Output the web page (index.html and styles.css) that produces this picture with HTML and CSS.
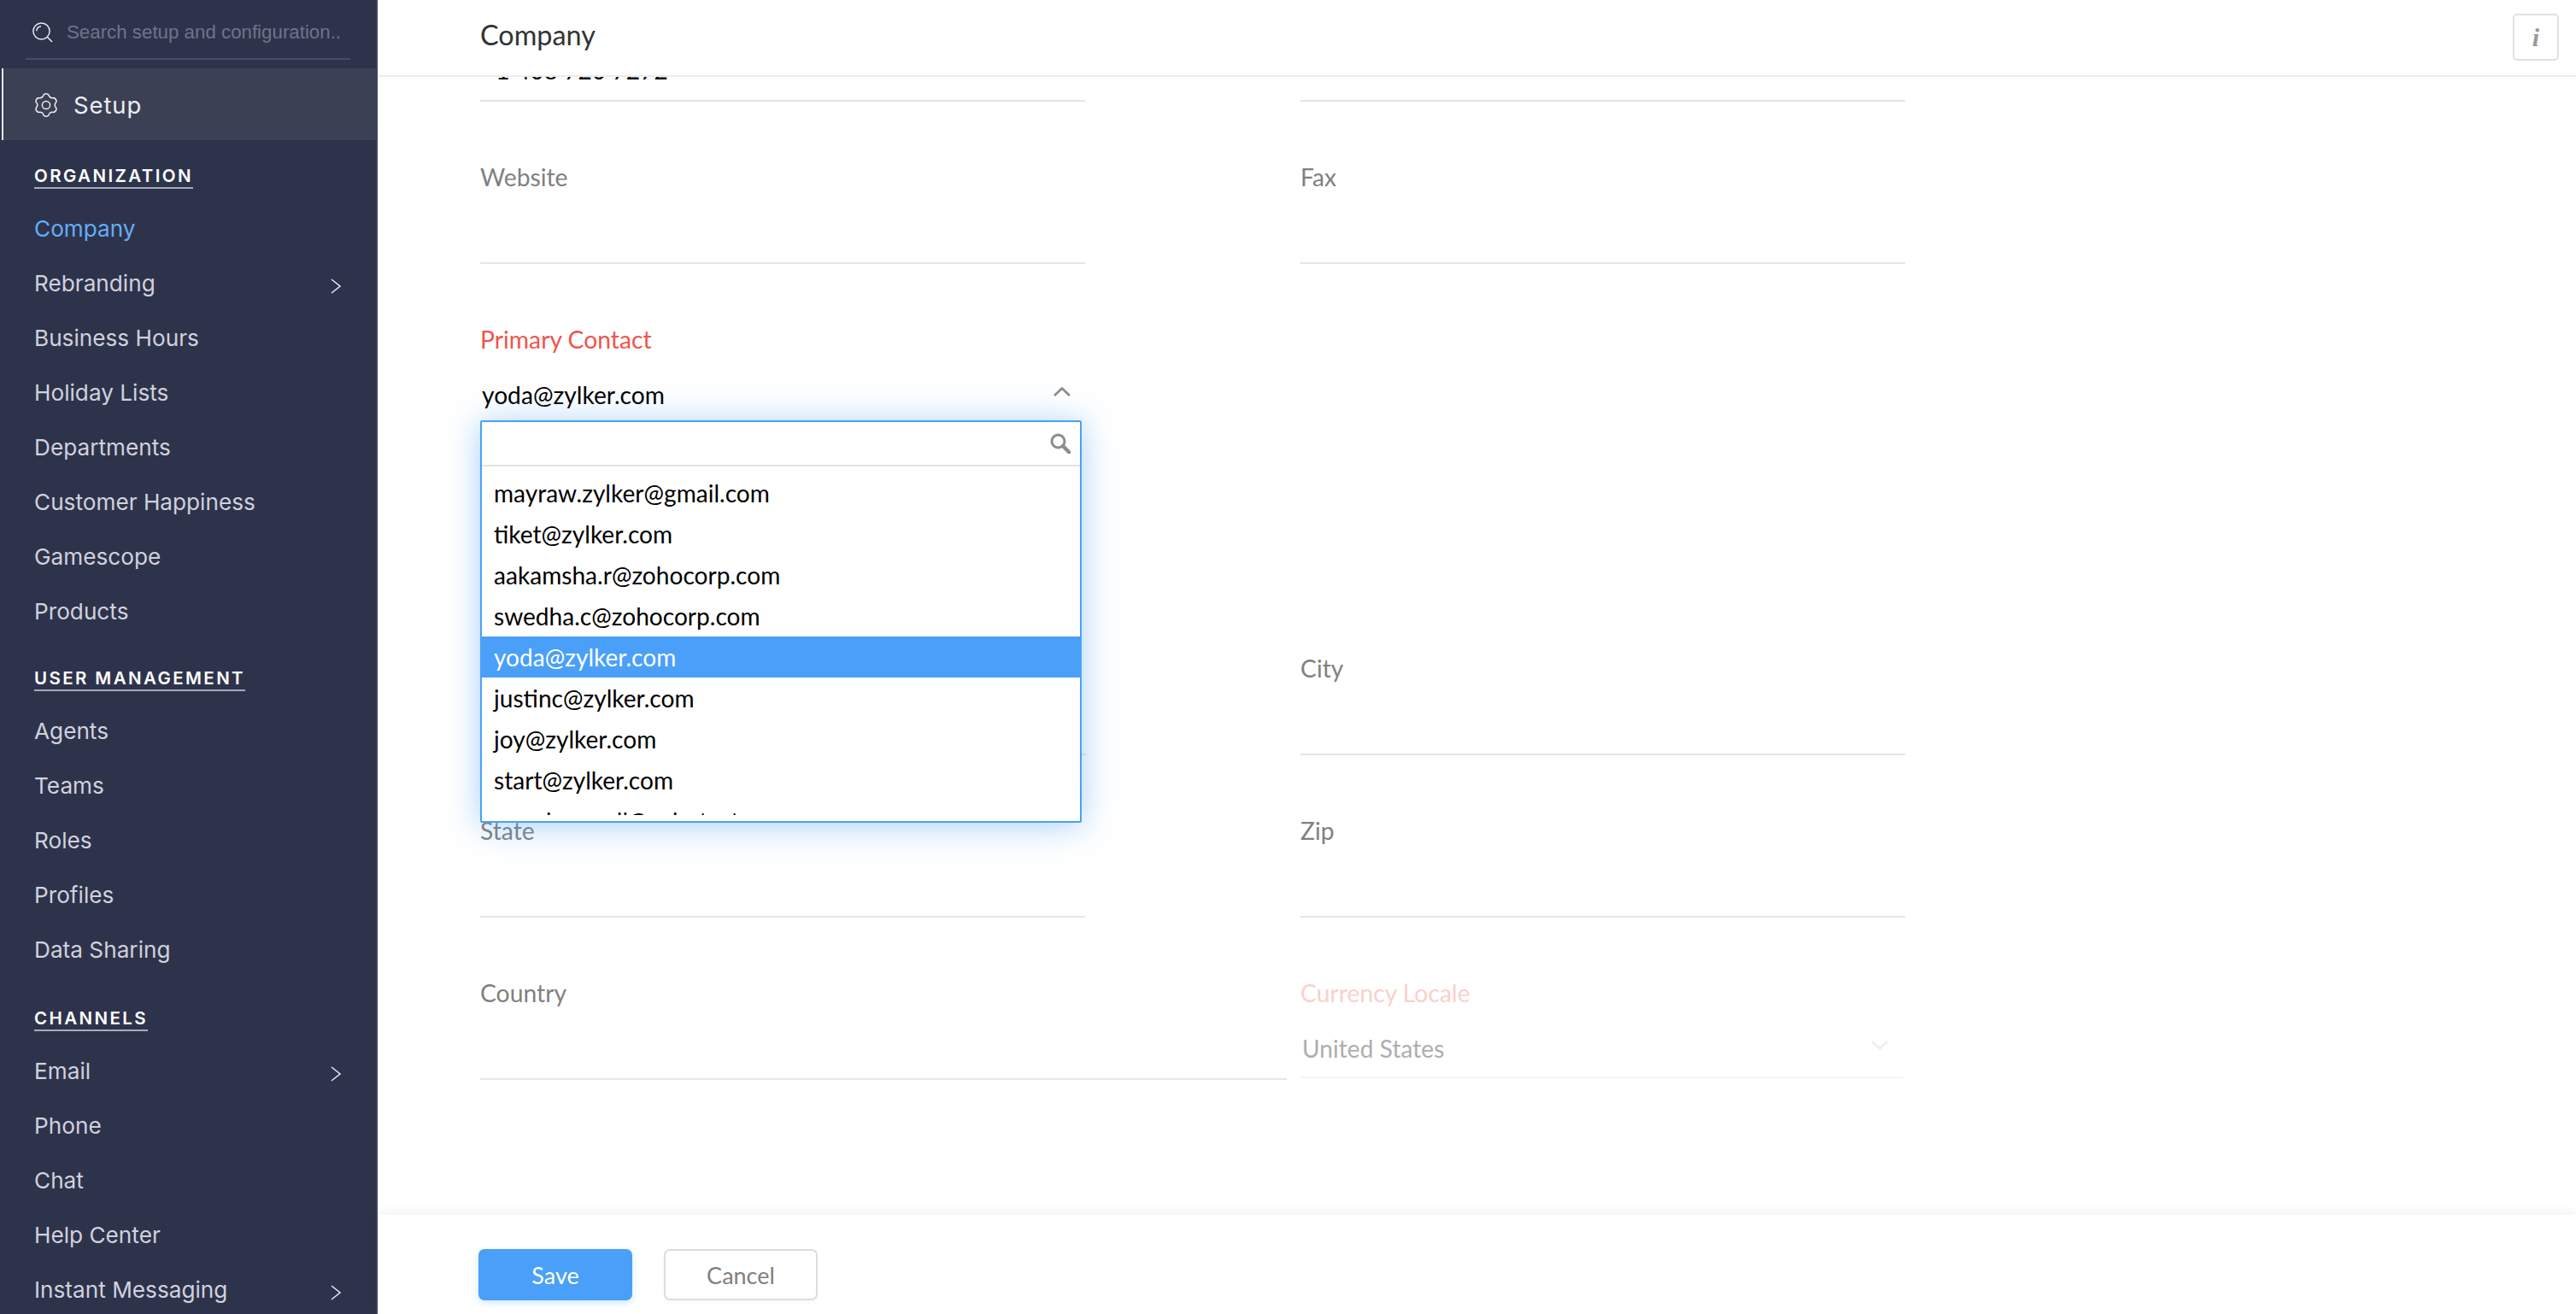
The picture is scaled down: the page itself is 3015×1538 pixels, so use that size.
FILE: index.html
```html
<!DOCTYPE html>
<html lang="en">
<head>
<meta charset="utf-8">
<title>Company - Setup</title>
<link rel="stylesheet" href="styles.css">
</head>
<body>
<div class="app">
  <aside class="sidebar">
    <div class="side-search">
      <svg class="side-search-icon" viewBox="0 0 24 24"><circle cx="10.5" cy="10.5" r="9.6"/><path d="M17.5 17.5 23 23M4.8 10.2A6 6 0 0 1 10 4.8"/></svg>
      <span class="side-search-text">Search setup and configuration..</span>
    </div>
    <div class="setup-row">
      <svg class="gear" viewBox="-1 -1 28 28"><path d="M10.19.82Q13-1.2 15.81.82Q17.25 5.64 22.14 4.47Q25.3 5.9 24.95 9.34Q21.5 13 24.95 16.66Q25.3 20.1 22.14 21.53Q17.25 20.36 15.81 25.18Q13 27.2 10.19 25.18Q8.75 20.36 3.86 21.53Q.7 20.1 1.05 16.66Q4.5 13 1.05 9.34Q.7 5.9 3.86 4.47Q8.75 5.64 10.19.82Z"/><circle cx="13" cy="13" r="4.6"/></svg>
      <span>Setup</span>
    </div>
    <nav class="section first">
      <h2 class="section-title">ORGANIZATION</h2>
      <a class="item active">Company</a>
      <a class="item">Rebranding<svg class="chev" viewBox="0 0 12 18"><path d="M1 1l10 8-10 8"/></svg></a>
      <a class="item">Business Hours</a>
      <a class="item">Holiday Lists</a>
      <a class="item">Departments</a>
      <a class="item">Customer Happiness</a>
      <a class="item">Gamescope</a>
      <a class="item">Products</a>
    </nav>
    <nav class="section">
      <h2 class="section-title">USER MANAGEMENT</h2>
      <a class="item">Agents</a>
      <a class="item">Teams</a>
      <a class="item">Roles</a>
      <a class="item">Profiles</a>
      <a class="item">Data Sharing</a>
    </nav>
    <nav class="section channels">
      <h2 class="section-title">CHANNELS</h2>
      <a class="item">Email<svg class="chev" viewBox="0 0 12 18"><path d="M1 1l10 8-10 8"/></svg></a>
      <a class="item">Phone</a>
      <a class="item">Chat</a>
      <a class="item">Help Center</a>
      <a class="item">Instant Messaging<svg class="chev" viewBox="0 0 12 18"><path d="M1 1l10 8-10 8"/></svg></a>
    </nav>
  </aside>
  <main class="main">
    <header class="topbar">
      <h1 class="page-title">Company</h1>
      <button class="info-btn" type="button">i</button>
    </header>
    <div class="content">
      <form class="form">
        <div class="field"><label class="label">Phone</label><div class="value">+1 408 720 7272</div></div>
        <div class="field"><label class="label">Mobile</label></div>
        <div class="field"><label class="label">Website</label></div>
        <div class="field"><label class="label">Fax</label></div>
        <div class="field open">
          <label class="label required">Primary Contact</label>
          <div class="value select">yoda@zylker.com<svg class="caret" viewBox="0 0 22 13"><path d="M2 11l9-8.5 9 8.5"/></svg></div>
          <div class="dropdown">
            <div class="dropdown-search">
              <svg viewBox="0 0 24 24"><circle cx="9.5" cy="9.5" r="7.5"/><path class="handle" d="M15 15l7.5 7.5"/></svg>
            </div>
            <ul class="options">
              <li class="option">mayraw.zylker@gmail.com</li>
              <li class="option">tiket@zylker.com</li>
              <li class="option">aakamsha.r@zohocorp.com</li>
              <li class="option">swedha.c@zohocorp.com</li>
              <li class="option selected">yoda@zylker.com</li>
              <li class="option">justinc@zylker.com</li>
              <li class="option">joy@zylker.com</li>
              <li class="option">start@zylker.com</li>
              <li class="option">ramakumar.ll@zohotest.com</li>
            </ul>
          </div>
        </div>
        <div class="field open"></div>
        <div class="spacer"></div>
        <div class="spacer"></div>
        <div class="field"></div>
        <div class="field"><label class="label">City</label></div>
        <div class="field"><label class="label">State</label></div>
        <div class="field"><label class="label">Zip</label></div>
        <div class="field wide"><label class="label">Country</label></div>
        <div class="field disabled">
          <label class="label">Currency Locale</label>
          <div class="value select">United States<svg class="caret" viewBox="0 0 22 13"><path d="M2 2l9 8.5 9-8.5"/></svg></div>
        </div>
      </form>
    </div>
    <footer class="footer">
      <button class="btn primary" type="button">Save</button>
      <button class="btn" type="button">Cancel</button>
    </footer>
  </main>
</div>
</body>
</html>
```
FILE: styles.css
```css
* { box-sizing: border-box; }
html, body { margin: 0; height: 100%; background: #fff; }
.app { display: flex; height: 100vh; overflow: hidden; font-family: Lato, "Open Sans", sans-serif; }

/* Sidebar */
.sidebar {
  width: 442px; flex: none; height: 100%; overflow: hidden;
  background: #2e334c; border-right: 2px solid #3e4356;
  font-family: Inter, "Open Sans", sans-serif;
}
.side-search {
  display: flex; align-items: center; height: 70px; margin: 0 30px 10px;
  padding: 7px 0 0 8px; border-bottom: 2px solid #484d63;
}
.side-search-icon { width: 24px; height: 24px; margin-right: 16px; fill: none; stroke: #e8e9ee; stroke-width: 1.5; }
.side-search-text { font: 22.3px "Liberation Sans", Arial, sans-serif; color: #6f7488; white-space: nowrap; }
.setup-row {
  display: flex; align-items: center; height: 84px; margin-left: 2px; padding-left: 36px; padding-top: 2px;
  background: #3b4054; border-left: 2px solid #e6e7ec;
  font-size: 27.5px; letter-spacing: .9px; color: #eceef3;
}
.gear { width: 28px; height: 28px; margin-right: 18px; fill: none; stroke: #e8e9ee; stroke-width: 1.5; }
.section { padding-top: 34.5px; }
.section.first { padding-top: 30px; }
.section.channels { padding-top: 36px; }
.section-title {
  width: fit-content; margin: 0 0 14.5px 40px; padding-bottom: 1px;
  border-bottom: 2px solid #a9abb8;
  font-size: 20.5px; line-height: 24px; font-weight: 600; letter-spacing: 2.4px; color: #fff;
}
.item {
  position: relative; display: flex; align-items: center; justify-content: space-between;
  height: 64px; padding: 0 41px 0 40px;
  font-size: 26.2px; color: #d0d2dc;
}
.item.active { color: #64aef4; }
.chev { width: 12px; height: 18px; margin-top: 7px; fill: none; stroke: #e6e7ec; stroke-width: 1.5; }

/* Main column */
.main { flex: 1; min-width: 0; display: flex; flex-direction: column; height: 100%; }
.topbar {
  flex: none; display: flex; align-items: center; justify-content: space-between;
  height: 90px; padding: 0 20px 7px 120px; border-bottom: 2px solid #ececec; background: #fff;
}
.page-title { margin: 0; font-size: 32.4px; font-weight: 400; color: #333; }
.info-btn {
  width: 54px; height: 55px; margin-top: 6px; padding: 0; background: #fff;
  border: 2px solid #e1e1e1; border-radius: 5px;
  font: italic bold 30px "Liberation Serif", serif; color: #999;
}
.content { flex: 1; min-height: 0; overflow: hidden; }
.form {
  display: grid; grid-template-columns: 708px 708px; column-gap: 252px;
  margin-top: -161px; padding-left: 120px;
}
.field {
  position: relative; height: 190px; padding-top: 71px; border-bottom: 2px solid #e4e4ea;
}
.field.open { border-bottom: 0; }
.field.wide { width: 944px; }
.spacer { height: 195px; }
.label { display: block; font-size: 28.3px; line-height: 34px; color: #808080; }
.label.required { color: #f0544c; }
.value { margin-top: 31px; padding-left: 2px; font-size: 28.2px; line-height: 34px; color: #000; }
.select { display: flex; justify-content: space-between; align-items: flex-start; padding-right: 16px; }
.caret { width: 22px; height: 13px; margin-top: 7px; fill: none; stroke: #8a8a8a; stroke-width: 2.6; }
.field.disabled { height: 188px; width: 705px; border-bottom-color: #f5f5f7; }
.disabled .label { color: #fbd0cc; }
.disabled .value { color: #aeaeae; }
.disabled .caret { stroke: #eeeeee; margin-right: 0; }

/* Dropdown */
.dropdown {
  position: absolute; z-index: 5; left: 0; top: 183px; width: 704px; height: 471px;
  padding-bottom: 7px; background: #fff; border: 2px solid #4aa0f8; border-radius: 2px;
  box-shadow: 0 3px 38px rgba(74, 160, 248, .5);
  display: flex; flex-direction: column;
}
.dropdown-search {
  flex: none; display: flex; align-items: center; justify-content: flex-end;
  height: 52px; padding-right: 11px; border-bottom: 2px solid #e4e4e4;
}
.dropdown-search svg { width: 24px; height: 24px; fill: none; stroke: #8c8c8c; stroke-width: 3; }
.dropdown-search .handle { stroke-width: 4.4; stroke-linecap: round; }
.options { flex: 1; min-height: 0; overflow: hidden; margin: 0; padding: 7px 0 0; list-style: none; }
.option { height: 48px; padding-left: 14px; font-size: 28.1px; line-height: 48px; color: #000; white-space: nowrap; }
.option.selected { background: #4aa0f8; color: #fff; }

/* Footer */
.footer {
  flex: none; position: relative; display: flex; gap: 37px; align-items: flex-start;
  height: 116px; padding: 40px 0 0 118px; background: #fff;
  box-shadow: 0 -4px 10px rgba(0, 0, 0, .05);
}
.btn {
  width: 180px; height: 60px; background: #fff; border: 2px solid #dddddd; border-radius: 7px;
  font: 27px Lato, sans-serif; color: #808080; box-shadow: 0 2px 6px rgba(0, 0, 0, .03);
}
.btn.primary { background: #4aa0f8; border-color: #4aa0f8; color: #fff; box-shadow: 0 3px 8px rgba(74, 160, 248, .25); }
```
